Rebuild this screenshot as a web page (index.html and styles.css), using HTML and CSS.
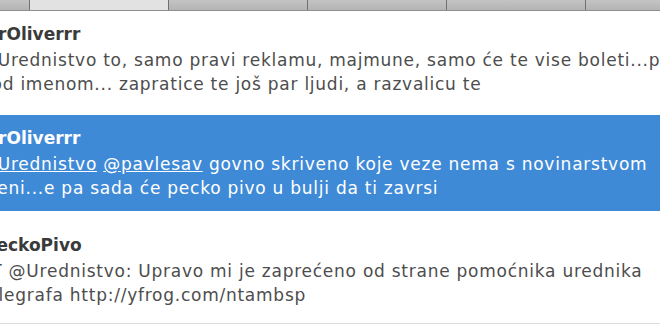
FILE: index.html
```html
<!DOCTYPE html>
<html lang="hr">
<head>
  <meta charset="UTF-8">
  <title>Timeline</title>
  <link rel="stylesheet" href="styles.css">
</head>
<body>
  <div class="header">
    <div class="col"></div>
    <div class="col active"></div>
    <div class="col"></div>
    <div class="col"></div>
    <div class="col"></div>
    <div class="col last"></div>
  </div>

  <ul class="timeline">
    <li class="tweet">
      <div class="name">DrOliverrr</div>
      <div class="line">@Urednistvo to, samo pravi reklamu, majmune, samo će te vise boleti...pa</div>
      <div class="line">pod imenom... zapratice te još par ljudi, a razvalicu te</div>
    </li>
    <li class="tweet selected">
      <div class="name">DrOliverrr</div>
      <div class="line"><a href="#">@Urednistvo</a> <a href="#">@pavlesav</a> govno skriveno koje veze nema s novinarstvom</div>
      <div class="line">meni...e pa sada će pecko pivo u bulji da ti zavrsi</div>
    </li>
    <li class="tweet">
      <div class="name">PeckoPivo</div>
      <div class="line">RT @Urednistvo: Upravo mi je zaprećeno od strane pomoćnika urednika</div>
      <div class="line">telegrafa http://yfrog.com/ntambsp</div>
    </li>
  </ul>
</body>
</html>
```

FILE: styles.css
```css
body {
  margin: 0;
  padding: 0;
  background-color: #ffffff;
  font-family: "DejaVu Sans", sans-serif;
  overflow: hidden;
}

.header {
  display: flex;
  height: 10px;
  background: linear-gradient(#c4c4c4, #b4b4b4);
  border-bottom: 1px solid #8e8e8e;
}

.header .col {
  width: 138px;
  border-right: 1px solid #707070;
}

.header .col:first-child {
  width: 29px;
}

.header .col.active {
  background: #e2e2e2;
}

.header .col.last {
  flex: 1;
  border-right: none;
}

.timeline {
  list-style: none;
  margin: 0;
  padding: 0;
}

.tweet {
  height: 96px;
  margin-bottom: 8px;
  padding-top: 11px;
  box-sizing: border-box;
  color: #4d4d4d;
  font-size: 17px;
  letter-spacing: 0.75px;
  overflow: hidden;
  white-space: nowrap;
}

.tweet .name,
.tweet .line {
  margin-left: -20px;
  line-height: 24px;
}

.tweet .name {
  font-weight: bold;
  color: #3a3a3a;
  letter-spacing: 0;
  margin-left: -16px;
  margin-bottom: 2px;
}

.tweet.selected {
  background-color: #3f8ad7;
  color: #ffffff;
}

.tweet.selected .name {
  color: #ffffff;
}

.tweet.selected a {
  color: #ffffff;
  text-decoration: underline;
}

.tweet:last-child {
  height: 105px;
  margin-bottom: 0;
  padding-top: 14px;
  border-bottom: 1px solid #dcdcdc;
}
```
